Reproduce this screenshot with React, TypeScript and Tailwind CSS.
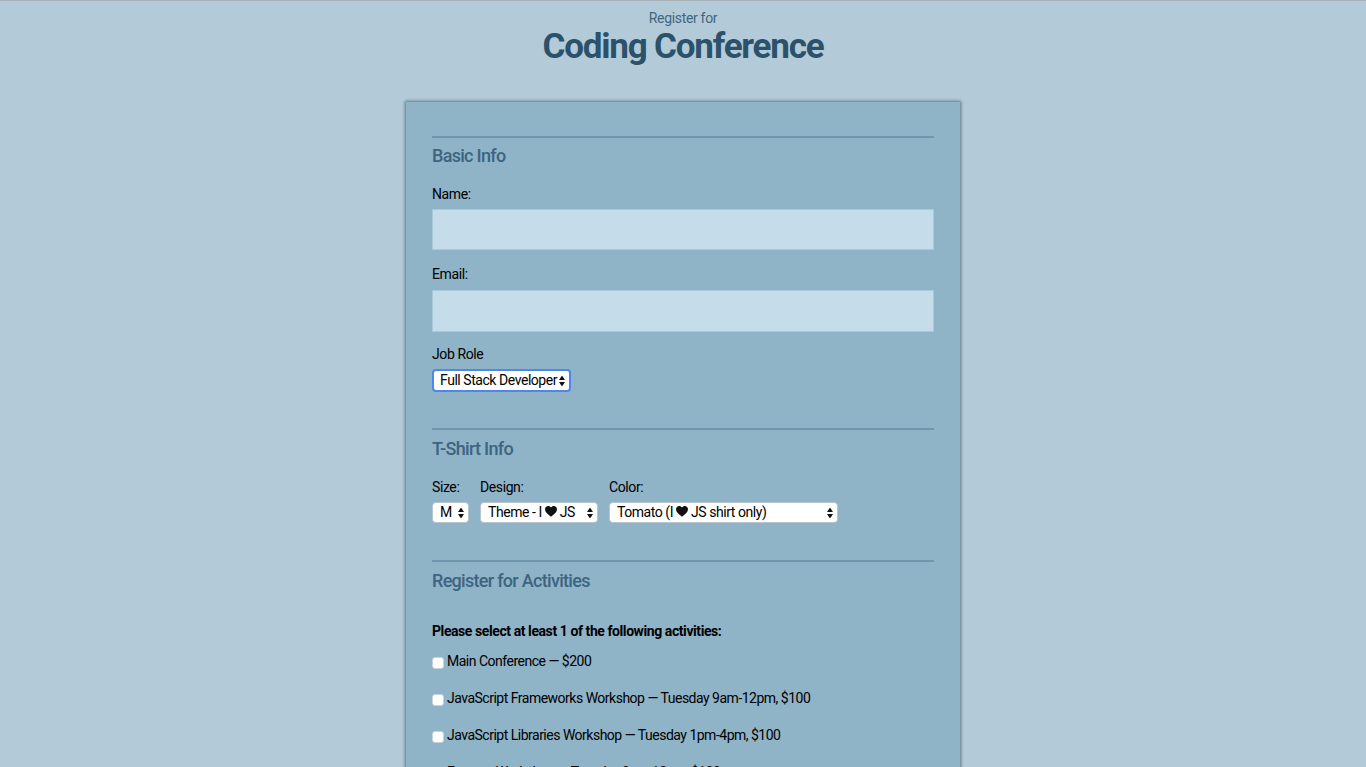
import React from "react"

function Arrows() {
  return (
    <svg width="6" height="11" viewBox="0 0 6 11" className="absolute right-[4px] top-1/2 -translate-y-1/2 pointer-events-none">
      <path d="M3 0 L6 4.5 H0 Z" fill="#111" />
      <path d="M0 6.5 H6 L3 11 Z" fill="#111" />
    </svg>
  )
}

function Heart() {
  return (
    <svg width="12" height="11" viewBox="0 0 24 22" className="inline-block mx-[3px] -mt-[2px] align-middle">
      <path d="M12 21.5 C5 16 0 11.8 0 6.6 C0 2.9 2.9 0 6.5 0 C8.8 0 10.9 1.2 12 3.1 C13.1 1.2 15.2 0 17.5 0 C21.1 0 24 2.9 24 6.6 C24 11.8 19 16 12 21.5 Z" fill="#111" />
    </svg>
  )
}

function Select({ children, className, focused }: { children: React.ReactNode; className: string; focused?: boolean }) {
  return (
    <div
      role="combobox"
      className={
        "relative flex items-center bg-white text-[14px] tracking-[-0.45px] text-black whitespace-nowrap overflow-hidden rounded-[4px] " +
        (focused ? "border-2 border-[#4f86ec] pl-[6px] " : "border border-[#b9c5cc] pl-[7px] ") +
        className
      }
    >
      {children}
      <Arrows />
    </div>
  )
}

function Activity({ label }: { label: string }) {
  return (
    <label className="flex items-center h-5 text-[14px] tracking-[-0.5px] text-black">
      <span className="mt-[3px] mr-[3px] h-[12px] w-[12px] rounded-[3px] bg-white border border-[#c9d3d9]" />
      {label}
    </label>
  )
}

export default function App() {
  const h2 = "text-[18px] leading-6 font-medium tracking-[-0.7px] text-[#3d6480]"
  const lbl = "text-[14px] leading-5 tracking-[-0.4px] text-black"
  return (
    <div className="min-h-screen bg-[#b3cbd8] border-t border-[#a5b0b7] font-['Roboto',sans-serif] overflow-hidden">
      <header className="text-center">
        <p className="text-[14px] leading-5 tracking-[-0.33px] text-[#3f6680] mt-[7px]">Register for</p>
        <h1 className="text-[35px] leading-[40px] font-bold tracking-[-1.2px] text-[#2c526b] -mt-[1px]">Coding Conference</h1>
      </header>

      <form className="mx-auto mt-[35px] w-[554px] bg-[#8fb3c7] shadow-[0_0_3px_1px_rgba(30,60,80,0.6)] px-[26px] pt-[34px] pb-10">
        <fieldset className="border-t-2 border-[#7096ac] flex flex-col">
          <h2 className={`${h2} mt-[6px]`}>Basic Info</h2>
          <label className={`${lbl} mt-[16px]`}>Name:</label>
          <input className="mt-[5px] h-[41px] bg-[#c5dcea] border border-[#a9c8da] outline-none" />
          <label className={`${lbl} mt-[14px]`}>Email:</label>
          <input className="mt-[6px] h-[42px] bg-[#c5dcea] border border-[#a9c8da] outline-none" />
          <label className={`${lbl} mt-[12px]`}>Job Role</label>
          <Select className="mt-[5px] w-[139px] h-[23px]" focused>Full Stack Developer</Select>
        </fieldset>

        <fieldset className="border-t-2 border-[#7096ac] flex flex-col mt-[36px]">
          <h2 className={`${h2} mt-[7px]`}>T-Shirt Info</h2>
          <div className="flex mt-[16px]">
            <div className="flex flex-col w-[37px] mr-[11px]">
              <label className={lbl}>Size:</label>
              <Select className="mt-[5px] w-[37px] h-[21px]">M</Select>
            </div>
            <div className="flex flex-col w-[118px] mr-[11px]">
              <label className={lbl}>Design:</label>
              <Select className="mt-[5px] w-[118px] h-[21px]">
                Theme - I<Heart />JS
              </Select>
            </div>
            <div className="flex flex-col w-[229px]">
              <label className={lbl}>Color:</label>
              <Select className="mt-[5px] w-[229px] h-[21px]">
                Tomato (I<Heart />JS shirt only)
              </Select>
            </div>
          </div>
        </fieldset>

        <fieldset className="border-t-2 border-[#7096ac] flex flex-col mt-[37px]">
          <h2 className={`${h2} mt-[7px]`}>Register for Activities</h2>
          <p className="text-[14px] leading-5 font-bold tracking-[-0.42px] text-black mt-[28px]">
            Please select at least 1 of the following activities:
          </p>
          <div className="flex flex-col gap-[17px] mt-[10px]">
            <Activity label="Main Conference — $200" />
            <Activity label="JavaScript Frameworks Workshop — Tuesday 9am-12pm, $100" />
            <Activity label="JavaScript Libraries Workshop — Tuesday 1pm-4pm, $100" />
            <Activity label="Express Workshop — Tuesday 9am-12pm, $100" />
            <Activity label="Node.js Workshop — Tuesday 1pm-4pm, $100" />
          </div>
        </fieldset>
      </form>
    </div>
  )
}
